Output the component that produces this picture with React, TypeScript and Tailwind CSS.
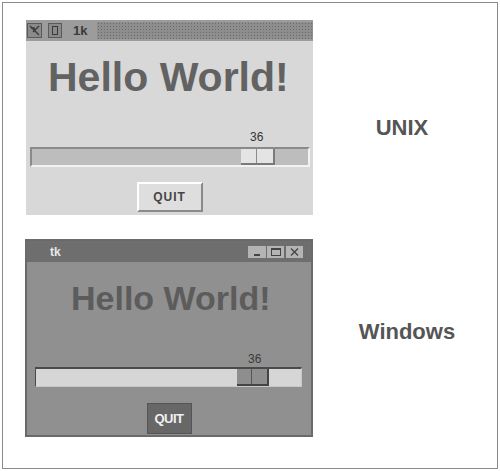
import React from "react";

const font = "font-['Liberation_Sans',Arial,sans-serif]";

function UnixWindow() {
  return (
    <div className="flex h-[195px] w-[287px] flex-col bg-[#d8d8d8]">
      <div className="flex h-[21px] items-center bg-[#9c9c9c]">
        <div className="ml-[1px] flex h-[15px] w-[15px] items-center justify-center border border-[#5a5a5a] bg-[#8a8a8a]">
          <svg width="11" height="11" viewBox="0 0 11 11">
            <path d="M1 1 L10 10 M10 1 L4 7 M2 3 L5 3 L5 6" stroke="#3a3a3a" strokeWidth="1.4" fill="none" />
          </svg>
        </div>
        <div className="ml-[6px] flex h-[15px] w-[14px] items-center justify-center border border-[#5a5a5a] bg-[#8a8a8a]">
          <div className="h-[9px] w-[6px] border border-[#3a3a3a]" />
        </div>
        <span className="ml-[11px] text-[13px] font-bold leading-none text-[#3a3a3a]">1k</span>
        <div className="ml-[10px] h-[17px] flex-1 bg-[#8e8e8e] bg-[radial-gradient(#6a6a6a_1px,transparent_1px)] bg-[length:3px_3px]" />
      </div>
      <div className="mt-[16px] pl-[22px] text-[41px] font-bold leading-none text-[#626262]">Hello World!</div>
      <div className="mt-[33px] pl-[224px] text-[12px] leading-none text-[#333]">36</div>
      <div className="ml-[4px] mt-[4px] flex h-[20px] w-[280px] items-center border-t-2 border-l-2 border-b-2 border-r-2 border-t-[#8a8a8a] border-l-[#8a8a8a] border-b-[#f2f2f2] border-r-[#f2f2f2] bg-[#bdbdbd] pl-[209px]">
        <div className="flex h-[16px] w-[34px] border-b-2 border-r-2 border-b-[#7a7a7a] border-r-[#7a7a7a] bg-[#e4e4e4]">
          <div className="h-full w-[16px] border-r border-[#8a8a8a]" />
        </div>
      </div>
      <div className="mt-[15px] flex justify-center">
        <div className="flex h-[30px] w-[66px] items-center justify-center border-t-2 border-l-2 border-b-2 border-r-2 border-t-white border-l-white border-b-[#8a8a8a] border-r-[#8a8a8a] bg-[#dedede] text-[12px] font-bold tracking-[1px] text-[#444]">
          QUIT
        </div>
      </div>
    </div>
  );
}

function WinWindow() {
  return (
    <div className="flex h-[198px] w-[288px] flex-col border-2 border-[#6a6a6a] bg-[#909090]">
      <div className="flex h-[21px] items-center bg-[#6e6e6e]">
        <span className="ml-[23px] text-[12px] font-bold leading-none text-[#e8e8e8]">tk</span>
        <div className="ml-auto mr-[8px] flex gap-[1px]">
          <div className="flex h-[12px] w-[18px] items-end justify-center bg-[#b4b4b4] pb-[2px]">
            <div className="h-[2px] w-[6px] bg-[#444]" />
          </div>
          <div className="flex h-[12px] w-[17px] items-center justify-center bg-[#b4b4b4]">
            <div className="h-[8px] w-[10px] border border-t-2 border-[#444]" />
          </div>
          <div className="ml-[1px] flex h-[12px] w-[17px] items-center justify-center bg-[#b4b4b4]">
            <svg width="9" height="8" viewBox="0 0 9 8">
              <path d="M1 0.5 L8 7.5 M8 0.5 L1 7.5" stroke="#444" strokeWidth="1.3" />
            </svg>
          </div>
        </div>
      </div>
      <div className="mt-[19px] pl-[44px] text-[34px] font-bold leading-none text-[#5c5c5c]">Hello World!</div>
      <div className="mt-[38px] pl-[221px] text-[12px] leading-none text-[#3a3a3a]">36</div>
      <div className="ml-[8px] mt-[2px] flex h-[20px] w-[267px] items-center border-t-2 border-l border-b border-r border-t-[#4a4a4a] border-l-[#4a4a4a] border-b-[#c8c8c8] border-r-[#c8c8c8] bg-[#d6d6d6] pl-[201px]">
        <div className="flex h-[17px] w-[32px] border-b-2 border-r-2 border-b-[#444] border-r-[#444] bg-[#8e8e8e]">
          <div className="h-full w-[15px] border-r border-[#555]" />
        </div>
      </div>
      <div className="mt-[16px] flex justify-center">
        <div className="flex h-[31px] w-[45px] items-center justify-center border border-[#555] bg-[#676767] text-[13px] font-bold tracking-[-0.5px] text-[#f0f0f0]">
          QUIT
        </div>
      </div>
    </div>
  );
}

export default function App() {
  return (
    <div className={`h-[471px] w-[500px] bg-white pl-[2px] pt-[2px] ${font}`}>
      <div className="flex h-[467px] w-[496px] flex-col border border-[#8a8a8a] pl-[23px] pt-[17px]">
        <div className="flex items-center">
          <UnixWindow />
          <div className="flex-1 pr-[6px] pt-[20px] text-center text-[22px] font-bold text-[#555]">UNIX</div>
        </div>
        <div className="-ml-[1px] mt-[24px] flex items-center">
          <WinWindow />
          <div className="flex-1 pb-[14px] pl-[4px] text-center text-[22px] font-bold text-[#555]">Windows</div>
        </div>
      </div>
    </div>
  );
}
